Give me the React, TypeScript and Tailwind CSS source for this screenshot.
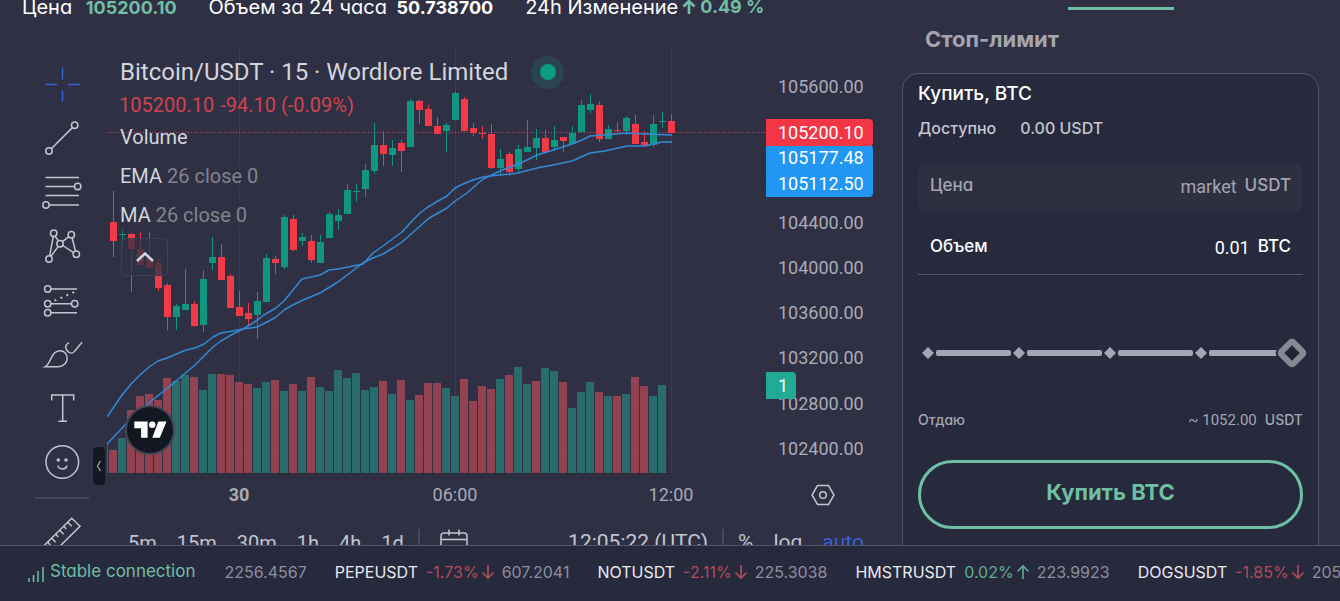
import { useState } from 'react'
import type { ReactNode } from 'react'

// [bodyTop, bodyBottom, wickTop, wickBottom, isUp]
type Candle = [number, number, number, number, 0 | 1]

const CANDLES: Candle[] = [
  [222, 241, 191, 257, 0], [234, 235, 228, 246, 1], [234, 249, 233, 292, 0], [249, 265, 231, 265, 0],
  [258, 268, 232, 268, 0], [263, 288, 259, 291, 0], [285, 317, 283, 330, 0], [306, 317, 304, 330, 1],
  [304, 310, 269, 310, 1], [304, 326, 301, 327, 0], [279, 325, 270, 332, 1], [257, 263, 237, 270, 1],
  [257, 280, 244, 280, 0], [276, 308, 274, 308, 0], [307, 316, 291, 316, 0], [313, 319, 303, 325, 0],
  [301, 315, 292, 339, 1], [258, 302, 254, 302, 1], [259, 263, 256, 274, 0], [217, 267, 215, 269, 1],
  [219, 250, 215, 251, 0], [237, 241, 233, 246, 1], [241, 260, 235, 263, 0], [242, 263, 235, 263, 1],
  [214, 238, 212, 238, 1], [215, 221, 209, 230, 1], [190, 214, 184, 214, 1], [191, 192, 184, 202, 1],
  [170, 189, 164, 197, 1], [145, 171, 123, 174, 1], [145, 154, 131, 166, 0], [148, 155, 140, 166, 1],
  [143, 151, 140, 172, 0], [101, 147, 99, 147, 1], [101, 110, 100, 124, 0], [109, 126, 105, 126, 0],
  [126, 134, 117, 134, 0], [125, 131, 123, 152, 1], [93, 120, 91, 120, 1], [99, 131, 97, 131, 0],
  [128, 133, 123, 136, 0], [133, 134, 126, 139, 0], [134, 168, 124, 169, 0], [159, 168, 149, 174, 1],
  [154, 172, 152, 176, 0], [149, 169, 145, 172, 1], [147, 152, 120, 152, 1], [138, 148, 129, 160, 1],
  [138, 152, 130, 153, 0], [140, 147, 126, 151, 1], [137, 141, 137, 152, 0], [133, 144, 126, 144, 1],
  [105, 132, 100, 132, 1], [104, 110, 94, 113, 1], [105, 139, 101, 142, 0], [129, 139, 125, 139, 1],
  [130, 131, 122, 134, 0], [118, 131, 116, 135, 1], [124, 144, 115, 144, 0], [142, 145, 131, 146, 0],
  [124, 145, 115, 147, 1], [121, 122, 112, 128, 1], [121, 133, 114, 133, 0],
]

const VOLUME_TOPS = [
  450, 438, 410, 396, 394, 400, 378, 381, 375, 377, 390, 374, 374, 375, 382, 384,
  388, 382, 380, 391, 384, 391, 377, 387, 391, 370, 378, 373, 390, 387, 381, 394,
  380, 400, 395, 383, 383, 388, 396, 379, 401, 386, 389, 379, 375, 367, 384, 381,
  368, 371, 382, 408, 392, 382, 392, 396, 396, 394, 377, 386, 396, 385,
]
const VOLUME_UP = '01000001101100001101010111111101010001100001011011011101010011'

const MA_LINE =
  '107,417 122,395 132,383 140,375 149,367 158,361 167,358 186,350 195,348 204,344 213,337 221,333 233,331 243,329 257,327 267,322 276,317 284,310 293,305 303,300 320,293 338,282 363,263 373,258 383,254 393,248 402,242 410,235 428,219 438,213 447,208 455,201 467,193 483,179 490,176 500,171 518,164 527,160 537,155 547,152 572,144 582,140 590,136 605,135 627,133 645,134 672,135'
const EMA_LINE =
  '107,444 125,425 133,417 150,402 169,387 195,365 213,347 221,341 233,334 243,329 253,323 267,313 276,308 284,301 293,290 302,279 320,275 329,270 338,269 363,264 373,253 383,246 402,232 412,221 420,213 428,207 438,201 447,196 455,188 463,184 473,180 483,177 490,176 510,174 518,173 537,168 553,165 572,161 590,153 605,151 627,146 645,146 662,142 672,142'

const PRICES = [
  '105600.00', '', '', '104400.00', '104000.00', '103600.00', '103200.00', '102800.00', '102400.00',
]

const TICKERS = [
  { name: 'PEPEUSDT', change: '-1.73%', up: false, price: '607.2041' },
  { name: 'NOTUSDT', change: '-2.11%', up: false, price: '225.3038' },
  { name: 'HMSTRUSDT', change: '0.02%', up: true, price: '223.9923' },
  { name: 'DOGSUSDT', change: '-1.85%', up: false, price: '205' },
]

function Arrow({ up, bold = false }: { up: boolean; bold?: boolean }) {
  return (
    <svg
      viewBox="0 0 14 16"
      className={`h-4 w-[14px] shrink-0 ${up ? '' : 'rotate-180'}`}
      fill="none"
      stroke="currentColor"
      strokeWidth={bold ? 2.6 : 1.6}
    >
      <path d="M7 15V2M1.5 7.5L7 2l5.5 5.5" />
    </svg>
  )
}

function Tool({ label, active, children }: { label: string; active?: boolean; children: ReactNode }) {
  return (
    <button aria-label={label} className={active ? 'text-[#3563d6]' : 'text-[#c3c5d0]'}>
      <svg viewBox="0 0 54 54" className="block size-[54px]" fill="none" stroke="currentColor" strokeWidth="1.5">
        {children}
      </svg>
    </button>
  )
}

function Toolbar() {
  return (
    <div className="flex w-[107px] shrink-0 flex-col items-start pt-[35px] pl-[35px]">
      <Tool label="Cross" active>
        <path d="M10.5 27.5h12M33 27.5h12M27.5 10.5v12M27.5 33v12" />
      </Tool>
      <Tool label="Trend line">
        <circle cx="39.7" cy="14.3" r="3.2" />
        <circle cx="14" cy="40" r="3.2" />
        <path d="M37.4 16.6L16.3 37.7" />
      </Tool>
      <Tool label="Fib retracement">
        <path d="M10.5 12.5H44M10.5 21.5h29M10.5 30.5H44M14.2 40H44" />
        <circle cx="42.7" cy="21.5" r="3.2" />
        <circle cx="11" cy="40" r="3.2" />
      </Tool>
      <Tool label="Patterns">
        <circle cx="18.7" cy="14.3" r="3.2" />
        <circle cx="36.3" cy="15.7" r="3.2" />
        <circle cx="25" cy="24.7" r="3.2" />
        <circle cx="41.3" cy="35.3" r="3.2" />
        <circle cx="14" cy="40" r="3.2" />
        <path d="M14.6 36.8l3.7-19.3M20 17.2l3.6 4.7M27.5 22.7l6.3-5M37.1 18.8l3.4 13.4M27.8 26.5l10.7 7.1M15.9 37.3l7.4-9.9" />
      </Tool>
      <Tool label="Forecasting">
        <circle cx="12.7" cy="16" r="3.2" />
        <circle cx="12.7" cy="30.7" r="3.2" />
        <circle cx="39.7" cy="30.7" r="3.2" />
        <circle cx="12.7" cy="39.7" r="3.2" />
        <path d="M16 16h26M16 30.7h20.4M16 39.7h26" />
        <path d="M19.5 27.7L41 18.3" strokeDasharray="2 4.5" strokeWidth="2" />
      </Tool>
      <Tool label="Brush">
        <path d="M10 39.8c5-3 5.4-9.5 9-13.3 3-3.3 8-3.8 11-.8 3.1 3.1 2.8 8.4-.2 11.300-2 2-4.400 2.800-7.300 2.800z" />
        <path d="M34 15.7c-3.5 1.7-4.3 4.6-2.3 7.3l1.5 1.7c1.7 1.7 4.3 1.7 6 0L47 15.3" />
      </Tool>
      <Tool label="Text">
        <path d="M16.7 19.5V14h22v5.5M27.7 14v26M23.5 40.2h8.5" />
      </Tool>
      <Tool label="Emoji">
        <circle cx="27.3" cy="27" r="16.3" />
        <circle cx="23.3" cy="25" r="1.7" fill="currentColor" stroke="none" />
        <circle cx="31" cy="25" r="1.7" fill="currentColor" stroke="none" />
        <path d="M23 30.5c.7 4.5 8.2 4.5 9 0" />
      </Tool>
      <div className="my-2 h-[2px] w-[54px] shrink-0 bg-[#45475a]" />
      <Tool label="Measure">
        <path d="M36.7 11.3l8.3 8L17 47l-8.3-8z" />
        <path d="M32.7 15.3l4 4M28.7 19.3l2.6 2.6M24.7 23.3l4 4M20.7 27.3l2.6 2.6M16.7 31.3l4 4M12.7 35.3l2.6 2.6" />
      </Tool>
    </div>
  )
}

function Plot() {
  return (
    <svg className="block h-[425px] w-full">
      <g transform="translate(-107 -48)">
        <g stroke="#414358" strokeWidth="1">
          {PRICES.map((_, i) => (
            <line key={i} x1="107" x2="766" y1={87.5 + i * 45 + (i > 4 ? 1 : 0)} y2={87.5 + i * 45 + (i > 4 ? 1 : 0)} strokeDasharray="1 3" />
          ))}
          {[239, 455, 671].map((x) => (
            <line key={x} x1={x + 0.5} x2={x + 0.5} y1="48" y2="473" stroke="#3a3c50" />
          ))}
        </g>
        <rect x="107" y="443" width="1" height="30" fill="#2b6f6d" />
        {VOLUME_TOPS.map((top, i) => (
          <rect
            key={i}
            x={109 + i * 9}
            y={top}
            width="8"
            height={473 - top}
            fill={VOLUME_UP[i] === '1' ? '#2a6c6b' : '#934252'}
          />
        ))}
        <line x1="107" x2="766" y1="132.5" y2="132.5" stroke="#d24352" strokeDasharray="1 2" />
        {CANDLES.map(([top, bottom, high, low, up], i) => (
          <g key={i} fill={up ? '#109580' : '#f03a48'}>
            <rect x={113 + i * 9} y={high} width="1" height={low - high} />
            <rect x={110 + i * 9} y={top} width="7" height={bottom - top} />
          </g>
        ))}
        <g fill="none" stroke="#3589d6" strokeWidth="1.5" strokeLinejoin="round">
          <polyline points={MA_LINE} />
          <polyline points={EMA_LINE} />
        </g>
      </g>
    </svg>
  )
}

function Legend() {
  return (
    <div className="absolute top-[9px] left-[10px] flex flex-col items-start whitespace-nowrap text-[20px] text-[#d3d5de]">
      <div className="flex items-center gap-[23px] px-[3px] text-[24px] leading-[30px]">
        <h1>Bitcoin/USDT · 15 · Wordlore Limited</h1>
        <span className="-my-1 flex size-[33px] items-center justify-center rounded-full bg-[#2b4450]">
          <span className="size-4 rounded-full bg-[#0f9a82]" />
        </span>
      </div>
      <div className="mt-[3px] flex gap-[6px] px-[2px] leading-[30px] text-[#d04352]">
        <span>105200.10</span>
        <span>-94.10 (-0.09%)</span>
      </div>
      <div className="px-[3px] leading-[34px]">Volume</div>
      <div className="mt-[5px] bg-[#2f3043]/50 px-[3px] leading-[35px]">
        EMA <span className="text-[#82848f]">26 close 0</span>
      </div>
      <div className="mt-1 bg-[#2f3043]/50 px-[3px] leading-[35px]">
        MA <span className="text-[#82848f]">26 close 0</span>
      </div>
      <button
        aria-label="Collapse legend"
        className="mt-[5px] ml-1 flex h-[38px] w-[47px] items-center justify-center rounded border border-[#3f4053] bg-[#2f3043]/75"
      >
        <svg viewBox="0 0 18 10" className="h-[10px] w-[18px]" fill="none" stroke="#d3d5de" strokeWidth="2.5">
          <path d="M1 9l8-7.5L17 9" />
        </svg>
      </button>
    </div>
  )
}

function Chart() {
  return (
    <div className="min-w-0 flex-1 pt-[26px] font-[Roboto,sans-serif]">
      <div className="flex border-b border-[#2a2b3b]">
        <div className="relative min-w-0 flex-1">
          <Plot />
          <Legend />
          <a
            href="#tradingview"
            aria-label="TradingView"
            className="absolute bottom-[18px] left-[18px] size-[50px] rounded-full border-2 border-[#434555] bg-[#131722]"
          >
            <svg viewBox="0 0 46 46" className="size-full" fill="#fff">
              <path d="M7.3 14.5h13.3v16.2h-6.5v-9.4H7.3zM31.3 14.5h8.2l-6.7 16.2h-7.5z" />
              <circle cx="25.2" cy="17.7" r="3.2" />
            </svg>
          </a>
          <button
            aria-label="Hide toolbar"
            className="absolute bottom-[-12px] left-[-14px] flex h-[38px] w-[12px] items-center justify-center rounded bg-[#131722]"
          >
            <svg viewBox="0 0 6 12" className="h-3 w-[6px]" fill="none" stroke="#a0a2ae" strokeWidth="1.3">
              <path d="M4.5 1L1.5 6l3 5" />
            </svg>
          </button>
        </div>
        <div className="relative w-[107px] shrink-0 pt-4 text-[18px] text-[#a9abb7]">
          <div className="flex h-[407px] flex-col">
            {PRICES.map((p, i) => (
              <div key={i} className="flex flex-1 items-center pl-3">{p}</div>
            ))}
          </div>
          <div className="absolute top-[97px] left-0 w-full rounded-r-sm bg-[#2196f3] pl-3 leading-[26px] text-white">
            <div>105177.48</div>
            <div>105112.50</div>
          </div>
          <div className="absolute top-[71px] left-0 w-full rounded-r-sm bg-[#f23645] pl-3 leading-[27px] text-white">
            105200.10
          </div>
          <div className="absolute top-[324px] left-0 w-[30px] rounded-r-sm bg-[#22ab94] pl-3 leading-[27px] text-white">
            1
          </div>
        </div>
      </div>
      <div className="flex h-[42px] items-center border-b border-[#2a2b3b] text-[18px] text-[#a9abb7]">
        <div className="flex w-[588px] justify-between pl-[108px]">
          <span className="w-12 text-center font-bold">30</span>
          <span className="w-12 text-center">06:00</span>
          <span className="w-12 text-center">12:00</span>
        </div>
        <button aria-label="Chart settings" className="mr-[38px] ml-auto">
          <svg viewBox="0 0 24 22" className="h-[22px] w-6" fill="none" stroke="#c3c5d0" strokeWidth="1.5">
            <path d="M6.5 1.5h11L23 11l-5.500 9.500h-11L1 11z" />
            <circle cx="12" cy="11" r="3.3" />
          </svg>
        </button>
      </div>
      <div className="flex h-[54px] items-center pr-[9px] pl-[21px] text-[20px] text-[#c3c5d0]">
        <div className="flex gap-5">
          {['5m', '15m', '30m', '1h', '4h', '1d'].map((t) => (
            <button key={t}>{t}</button>
          ))}
        </div>
        <div className="mr-4 ml-[14px] h-7 w-[2px] bg-[#45475a]" />
        <button aria-label="Go to date" className="ml-1">
          <svg viewBox="0 0 28 28" className="size-7" fill="none" stroke="currentColor" strokeWidth="1.5">
            <rect x="1" y="4" width="26" height="22" rx="3" />
            <path d="M1 10.5h26M9 .5v6M19 .5v6" />
          </svg>
        </button>
        <div className="ml-auto flex items-center text-[21px]">
          <button>12:05:22 (UTC)</button>
          <div className="mx-[14px] h-7 w-[2px] bg-[#45475a]" />
          <div className="flex gap-5">
            <button>%</button>
            <button>log</button>
            <button className="text-[#3563d6]">auto</button>
          </div>
        </div>
      </div>
    </div>
  )
}

function AmountSlider() {
  const [value, setValue] = useState(100)
  return (
    <div className="relative mt-[63px] mr-[5px] ml-1 flex h-[30px] items-center gap-[2px]">
      {[0, 1, 2, 3].map((i) => (
        <div key={i} className="flex flex-1 items-center gap-[2px]">
          <svg viewBox="0 0 12 12" className="size-3 shrink-0" fill="#a5a5b3">
            <path d="M6 0l6 6-6 6-6-6z" />
          </svg>
          <div className="h-[6px] flex-1 rounded-[2px] bg-[#a5a5b3]" />
        </div>
      ))}
      <div className="w-3 shrink-0" />
      <div className="pointer-events-none absolute inset-y-0 right-3 left-0">
        <svg
          viewBox="0 0 36 36"
          className="absolute top-1/2 size-9 -translate-y-1/2"
          style={{ left: `calc(${value}% - 12px)` }}
        >
          <rect x="5" y="5" width="26" height="26" rx="5" transform="rotate(45 18 18)" fill="#27293d" />
          <rect x="9.5" y="9.5" width="17" height="17" rx="2" transform="rotate(45 18 18)" fill="#232532" stroke="#868894" strokeWidth="6" />
        </svg>
      </div>
      <input
        type="range"
        aria-label="Объем, %"
        min={0}
        max={100}
        step={25}
        value={value}
        onChange={(e) => setValue(Number(e.target.value))}
        className="absolute inset-0 w-full cursor-pointer opacity-0"
      />
    </div>
  )
}

function OrderPanel() {
  const [amount, setAmount] = useState('0.01')
  return (
    <aside className="mr-[21px] w-[417px] shrink-0">
      <div className="pt-[7px] pl-[166px]">
        <div className="h-[3px] w-[106px] bg-[#6fbfa4]" />
      </div>
      <button className="mt-[13px] ml-[23px] block text-[22px] leading-8 font-bold text-[#a5a5b1]">Стоп-лимит</button>
      <form
        className="mt-[18px] rounded-t-2xl border border-[#545566] bg-[#27293d] px-[15px] pt-1 pb-10 text-[17px] font-medium text-white"
        onSubmit={(e) => e.preventDefault()}
      >
        <h2 className="text-[19px] leading-8">Купить, BTC</h2>
        <div className="mt-[6px] flex gap-6 text-[16px] leading-6 text-[#c6c7d0]">
          <span>Доступно</span>
          <span>0.00 USDT</span>
        </div>
        <div className="mt-6 flex h-12 items-center rounded-lg bg-[#2f2f42] px-3 pb-1 text-[#a5a5b1]">
          <label htmlFor="price">Цена</label>
          <input
            id="price"
            value="market"
            readOnly
            className="min-w-0 flex-1 bg-transparent text-right font-[Roboto,sans-serif] text-[18px] font-normal outline-none"
          />
          <span className="ml-2">USDT</span>
        </div>
        <div className="mt-2 flex h-[55px] items-center border-b border-[#545566] px-3">
          <label htmlFor="amount">Объем</label>
          <input
            id="amount"
            value={amount}
            onChange={(e) => setAmount(e.target.value)}
            className="min-w-0 flex-1 bg-transparent text-right font-[Roboto,sans-serif] text-[18px] font-normal outline-none"
          />
          <span className="ml-2">BTC</span>
        </div>
        <AmountSlider />
        <div className="mt-10 flex items-center text-[14px] leading-6 text-[#a5a5b1]">
          <span>Отдаю</span>
          <span className="ml-auto font-[Roboto,sans-serif] text-[15px] font-normal">~ 1052.00</span>
          <span className="ml-2">USDT</span>
        </div>
        <button className="mt-7 h-[69px] w-full rounded-full border-3 border-[#6fbfa4] pb-1 text-[22px] font-bold text-[#6fbfa4]">
          Купить BTC
        </button>
      </form>
    </aside>
  )
}

function TickerBar() {
  return (
    <footer className="flex h-14 shrink-0 items-center overflow-hidden border-t border-[#545566] bg-[#27293d] pb-[3px] pl-7 text-[16px] whitespace-nowrap">
      <div className="flex shrink-0 items-center gap-[6px] text-[17px] text-[#6fbfa4]">
        <svg viewBox="0 0 16 16" className="mt-1 size-4" stroke="currentColor" strokeWidth="1.5">
          <path d="M1 16v-4M5.5 16V9M10 16V5M15 16V1" />
        </svg>
        Stable connection
      </div>
      <div className="ml-[29px] flex shrink-0 gap-7 text-[#8e8f9d]">
        <span>2256.4567</span>
        {TICKERS.map((t) => (
          <a key={t.name} href={`#${t.name}`} className="flex items-center">
            <span className="mr-2 text-[#e9e9ee]">{t.name}</span>
            <span className={`flex items-center gap-[2px] ${t.up ? 'text-[#5fae93]' : 'text-[#b14d5b]'}`}>
              {t.change}
              <Arrow up={t.up} />
            </span>
            <span className="ml-[7px]">{t.price}</span>
          </a>
        ))}
      </div>
    </footer>
  )
}

export default function App() {
  return (
    <div className="flex h-screen flex-col overflow-hidden bg-[#2f3043] font-[Inter,sans-serif] text-white [font-feature-settings:'cv11']">
      <main className="flex min-h-0 flex-1 items-start overflow-hidden">
        <section className="mr-[29px] min-w-0 flex-1">
          <div className="-mt-2 flex h-[30px] items-center gap-8 pl-[22px] text-[20px] leading-7 whitespace-nowrap">
            <span>
              Цена <b className="ml-2 text-[18px] text-[#6fbfa4]">105200.10</b>
            </span>
            <span>
              Объем за 24 часа <b className="ml-1 text-[18px]">50.738700</b>
            </span>
            <span className="flex items-center">
              24h Изменение
              <b className="ml-1 flex items-center gap-1 text-[18px] text-[#6fbfa4]">
                <Arrow up bold />
                0.49 %
              </b>
            </span>
          </div>
          <div className="flex">
            <Toolbar />
            <Chart />
          </div>
        </section>
        <OrderPanel />
      </main>
      <TickerBar />
    </div>
  )
}
